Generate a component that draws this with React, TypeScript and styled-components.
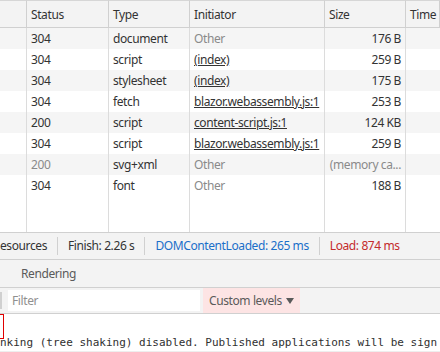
import styled, { createGlobalStyle } from "styled-components";

const Global = createGlobalStyle`
  html, body {
    margin: 0;
    padding: 0;
    background: #fff;
  }
  body {
    font-family: "Segoe UI", "Noto Sans", "Liberation Sans", sans-serif;
    font-size: 12px;
    letter-spacing: -0.4px;
    color: #333;
  }
  * {
    box-sizing: border-box;
  }
`;

const COLS = "27px 82px 81px 135px 81px 1fr";

const Panel = styled.div`
  width: 440px;
  height: 352px;
  display: flex;
  flex-direction: column;
  overflow: hidden;
`;

const Grid = styled.div`
  display: grid;
  grid-template-columns: ${COLS};
  grid-template-rows: 28px;
  grid-auto-rows: 21px;
  flex-shrink: 0;
`;

const HeadCell = styled.div`
  background: #f3f3f3;
  border-top: 1px solid #d6d6d6;
  border-bottom: 1px solid #d0d0d0;
  border-right: 1px solid #d0d0d0;
  padding-left: 4px;
  display: flex;
  align-items: center;
  white-space: nowrap;
  overflow: hidden;
  &:last-child {
    border-right: none;
  }
`;

const Cell = styled.div<{ $stripe: boolean; $dim?: boolean; $right?: boolean; $link?: boolean }>`
  background: ${(p) => (p.$stripe ? "#f5f5f5" : "#fff")};
  color: ${(p) => (p.$dim ? "#8a8a8a" : "#333")};
  text-decoration: ${(p) => (p.$link ? "underline" : "none")};
  border-right: 1px solid #dcdcdc;
  padding: 0 4px;
  display: flex;
  align-items: center;
  justify-content: ${(p) => (p.$right ? "flex-end" : "flex-start")};
  white-space: nowrap;
  overflow: hidden;
  &:nth-child(6n) {
    border-right: none;
  }
`;

const Filler = styled.div`
  height: 36px;
  flex-shrink: 0;
  display: grid;
  grid-template-columns: ${COLS};
`;

const FillCol = styled.div`
  border-right: 1px solid #dcdcdc;
  &:last-child {
    border-right: none;
  }
`;

const StatusBar = styled.div`
  height: 28px;
  flex-shrink: 0;
  background: #f3f3f3;
  border-top: 1px solid #d0d0d0;
  border-bottom: 1px solid #d0d0d0;
  display: flex;
  align-items: center;
  white-space: nowrap;
`;

const StatusItem = styled.span<{ $color?: string }>`
  color: ${(p) => p.$color || "#333"};
  padding: 0 10px;
  border-left: 1px solid #d0d0d0;
  line-height: 18px;
  &:first-child {
    border-left: none;
    padding-left: 0;
  }
`;

const Tabs = styled.div`
  height: 28px;
  flex-shrink: 0;
  background: #f3f3f3;
  border-bottom: 1px solid #d0d0d0;
  display: flex;
  align-items: center;
  padding-left: 21px;
  color: #5a5a5a;
`;

const FilterBar = styled.div`
  height: 26px;
  flex-shrink: 0;
  background: #f3f3f3;
  border-bottom: 1px solid #d0d0d0;
  display: flex;
  align-items: stretch;
`;

const Divider = styled.div`
  width: 2px;
  margin: 4px 0;
  background: #d0d0d0;
`;

const FilterInput = styled.div`
  width: 192px;
  margin: 2px 3px 2px 6px;
  background: #fff;
  color: #909090;
  padding-left: 4px;
  display: flex;
  align-items: center;
`;

const Levels = styled.div`
  background: #fde4e4;
  color: #5a5a5a;
  padding: 0 6px;
  display: flex;
  align-items: center;
  gap: 4px;
`;

const Console = styled.div`
  flex: 1;
  min-height: 0;
  overflow: hidden;
  background: #fff;
  display: flex;
  flex-direction: column;
`;

const ErrorMark = styled.div`
  width: 4px;
  height: 25px;
  flex-shrink: 0;
  border: 1px solid #e00000;
  border-left: none;
`;

const Message = styled.div`
  font-family: "DejaVu Sans Mono", "Liberation Mono", monospace;
  font-size: 11px;
  letter-spacing: 0;
  color: #303030;
  white-space: nowrap;
  overflow: hidden;
  line-height: 14px;
  margin-top: -3px;
  padding-bottom: 1px;
  border-bottom: 1px solid #eee;
`;

type Row = {
  status: string;
  type: string;
  initiator: string;
  link: boolean;
  size: string;
  dim?: boolean;
};

const rows: Row[] = [
  { status: "304", type: "document", initiator: "Other", link: false, size: "176 B" },
  { status: "304", type: "script", initiator: "(index)", link: true, size: "259 B" },
  { status: "304", type: "stylesheet", initiator: "(index)", link: true, size: "175 B" },
  { status: "304", type: "fetch", initiator: "blazor.webassembly.js:1", link: true, size: "253 B" },
  { status: "200", type: "script", initiator: "content-script.js:1", link: true, size: "124 KB" },
  { status: "304", type: "script", initiator: "blazor.webassembly.js:1", link: true, size: "259 B" },
  { status: "200", type: "svg+xml", initiator: "Other", link: false, size: "(memory ca...", dim: true },
  { status: "304", type: "font", initiator: "Other", link: false, size: "188 B" },
];

export default function App() {
  return (
    <>
      <Global />
      <Panel>
        <Grid>
          <HeadCell />
          <HeadCell>Status</HeadCell>
          <HeadCell>Type</HeadCell>
          <HeadCell>Initiator</HeadCell>
          <HeadCell>Size</HeadCell>
          <HeadCell>Time</HeadCell>
          {rows.map((r, i) => {
            const stripe = i % 2 === 0;
            return [
              <Cell key={i + "a"} $stripe={stripe} />,
              <Cell key={i + "b"} $stripe={stripe} $dim={r.dim}>{r.status}</Cell>,
              <Cell key={i + "c"} $stripe={stripe}>{r.type}</Cell>,
              <Cell key={i + "d"} $stripe={stripe} $dim={!r.link} $link={r.link}>{r.initiator}</Cell>,
              <Cell key={i + "e"} $stripe={stripe} $dim={r.dim} $right>{r.size}</Cell>,
              <Cell key={i + "f"} $stripe={stripe} />,
            ];
          })}
        </Grid>
        <Filler>
          <FillCol />
          <FillCol />
          <FillCol />
          <FillCol />
          <FillCol />
          <FillCol />
        </Filler>
        <StatusBar>
          <StatusItem>esources</StatusItem>
          <StatusItem>Finish: 2.26 s</StatusItem>
          <StatusItem $color="#1a6fc9">DOMContentLoaded: 265 ms</StatusItem>
          <StatusItem $color="#c42b2b">Load: 874 ms</StatusItem>
        </StatusBar>
        <Tabs>Rendering</Tabs>
        <FilterBar>
          <Divider />
          <FilterInput>Filter</FilterInput>
          <Levels>
            Custom levels
            <svg width="8" height="8" viewBox="0 0 8 8">
              <path d="M0 1 L8 1 L4 7 Z" fill="#5a5a5a" />
            </svg>
          </Levels>
        </FilterBar>
        <Console>
          <ErrorMark />
          <Message>nking (tree shaking) disabled. Published applications will be sign</Message>
        </Console>
      </Panel>
    </>
  );
}
